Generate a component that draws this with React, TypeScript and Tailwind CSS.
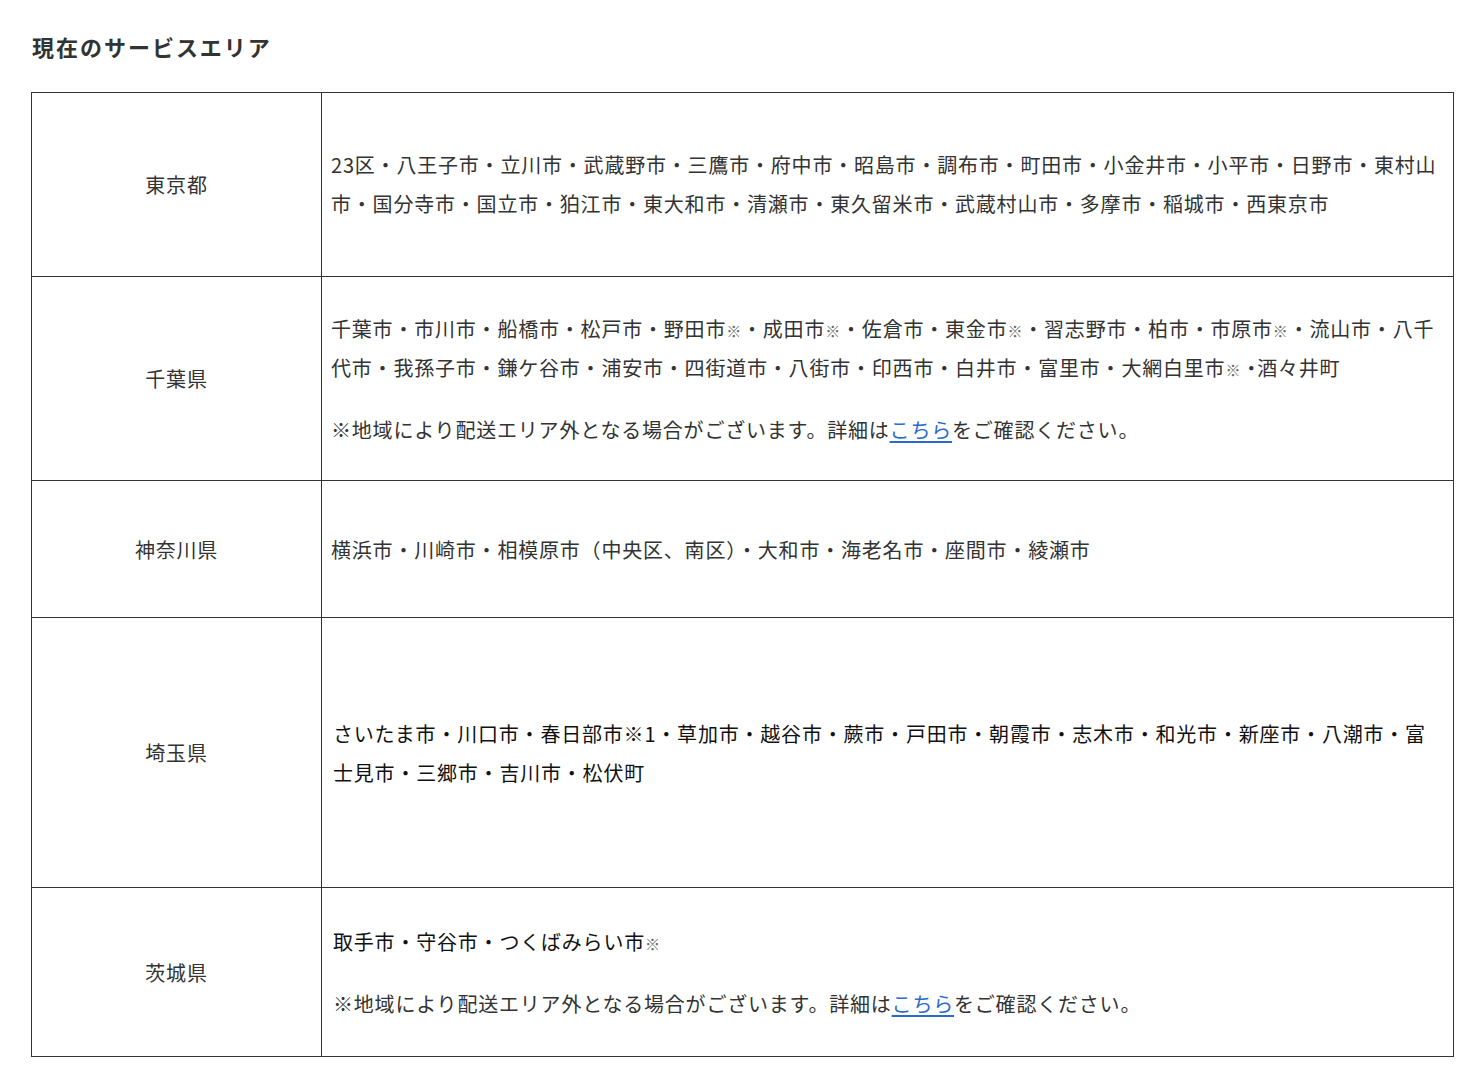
import React from "react";

const S = ({ children }: { children: React.ReactNode }) => (
  <span className="text-[15px] leading-none text-[#666]">{children}</span>
);

const Link = () => (
  <a href="#" className="text-[#2a6ad0] underline underline-offset-[3px]">
    こちら
  </a>
);

function Row({
  label,
  h,
  children,
}: {
  label: string;
  h: string;
  children: React.ReactNode;
}) {
  return (
    <div className={`flex box-border border-b border-[#333] ${h}`}>
      <div className="w-[290px] shrink-0 box-border border-r border-[#333] flex items-center justify-center text-[#333]">
        {label}
      </div>
      <div className="flex-1 flex flex-col justify-center">{children}</div>
    </div>
  );
}

export default function App() {
  return (
    <div
      className="bg-white min-h-[1078px] pt-[30px] text-[20px] tracking-[0.04em] leading-[39px]"
      style={{ fontFamily: '"Noto Sans CJK JP", "Noto Sans", sans-serif' }}
    >
      <h2 className="ml-[32px] text-[22px] font-bold tracking-[0.09em] leading-[33px] text-[#333] mb-[29px]">
        現在のサービスエリア
      </h2>
      <div className="ml-[31px] w-[1423px] box-border border-t border-l border-r border-[#333]">
        <Row label="東京都" h="h-[184px]">
          <p className="pl-[9px] pb-[1px] text-[#333] whitespace-nowrap">
            23区・八王子市・立川市・武蔵野市・三鷹市・府中市・昭島市・調布市・町田市・小金井市・小平市・日野市・東村山
            <br />
            市・国分寺市・国立市・狛江市・東大和市・清瀬市・東久留米市・武蔵村山市・多摩市・稲城市・西東京市
          </p>
        </Row>
        <Row label="千葉県" h="h-[204px]">
          <p className="pl-[9px] text-[#333] whitespace-nowrap">
            千葉市・市川市・船橋市・松戸市・野田市<S>※</S>・成田市<S>※</S>・佐倉市・東金市<S>※</S>・習志野市・柏市・市原市<S>※</S>・流山市・八千
            <br />
            代市・我孫子市・鎌ケ谷市・浦安市・四街道市・八街市・印西市・白井市・富里市・大網白里市<S>※</S>
            <span className="tracking-[-0.2em]">・</span>酒々井町
          </p>
          <p className="pl-[9px] mt-[23px] text-[#333] whitespace-nowrap">
            ※地域により配送エリア外となる場合がございます。詳細は<Link />をご確認ください。
          </p>
        </Row>
        <Row label="神奈川県" h="h-[137px]">
          <p className="pl-[9px] text-[#333] whitespace-nowrap">
            横浜市・川崎市・相模原市（中央区、南区）・大和市・海老名市・座間市・綾瀬市
          </p>
        </Row>
        <Row label="埼玉県" h="h-[270px]">
          <p className="pl-[11px] text-[#111] whitespace-nowrap">
            さいたま市・川口市・春日部市※1・草加市・越谷市・蕨市・戸田市・朝霞市・志木市・和光市・新座市・八潮市・富
            <br />
            士見市・三郷市・吉川市・松伏町
          </p>
        </Row>
        <Row label="茨城県" h="h-[169px]">
          <p className="pl-[11px] text-[#111] whitespace-nowrap">
            取手市・守谷市・つくばみらい市<S>※</S>
          </p>
          <p className="pl-[11px] mt-[23px] text-[#333] whitespace-nowrap">
            ※地域により配送エリア外となる場合がございます。詳細は<Link />をご確認ください。
          </p>
        </Row>
      </div>
    </div>
  );
}
